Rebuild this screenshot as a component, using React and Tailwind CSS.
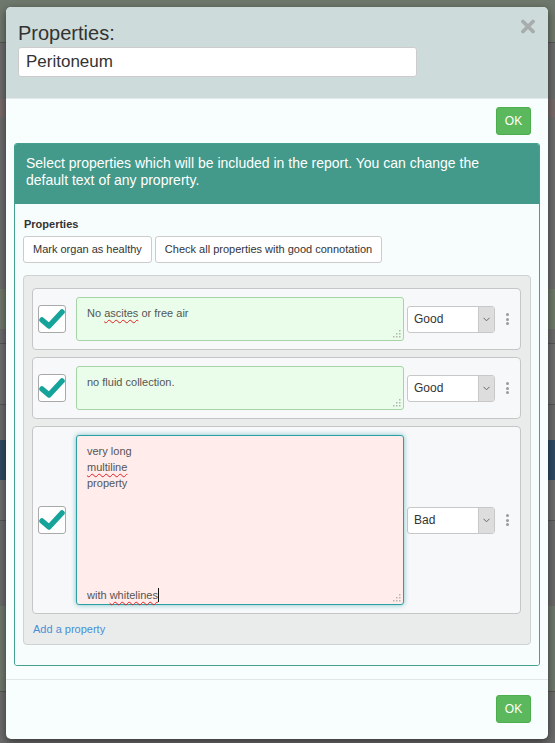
import React from 'react';

const font = { fontFamily: '"Liberation Sans", Arial, sans-serif' };

function Check() {
  return (
    <div className="w-[28px] h-[28px] shrink-0 rounded-[3px] border border-[#a9a9a9] bg-white flex items-center justify-center">
      <svg width="26" height="22" viewBox="0 0 26 22">
        <path d="M3 12 L10 18 L23 4" fill="none" stroke="#16a39a" strokeWidth="5.5" strokeLinecap="round" strokeLinejoin="round" />
      </svg>
    </div>
  );
}

function Grip() {
  return (
    <svg className="absolute right-[2px] bottom-[2px]" width="8" height="8" viewBox="0 0 8 8">
      <rect x="6" y="0" width="1.5" height="1.5" fill="#b5b5b5" />
      <rect x="3" y="3" width="1.5" height="1.5" fill="#b5b5b5" />
      <rect x="6" y="3" width="1.5" height="1.5" fill="#b5b5b5" />
      <rect x="0" y="6" width="1.5" height="1.5" fill="#b5b5b5" />
      <rect x="3" y="6" width="1.5" height="1.5" fill="#b5b5b5" />
      <rect x="6" y="6" width="1.5" height="1.5" fill="#b5b5b5" />
    </svg>
  );
}

function Select({ value }) {
  return (
    <div className="w-[88px] h-[27px] shrink-0 flex rounded-[3px] border border-[#c8c8c8] bg-white overflow-hidden">
      <div className="flex-1 flex items-center pl-[6px] text-[12px] text-[#333]">{value}</div>
      <div className="w-[16px] bg-[#dddddd] border-l border-[#c8c8c8] flex items-center justify-center">
        <svg width="7" height="5" viewBox="0 0 7 5">
          <path d="M0.5 0.8 L3.5 3.8 L6.5 0.8" fill="none" stroke="#666" strokeWidth="1" />
        </svg>
      </div>
    </div>
  );
}

function Dots() {
  return (
    <div className="w-[24px] flex flex-col items-center gap-[1.5px] shrink-0">
      <span className="w-[3px] h-[3px] rounded-full bg-[#9a9a9a]" />
      <span className="w-[3px] h-[3px] rounded-full bg-[#9a9a9a]" />
      <span className="w-[3px] h-[3px] rounded-full bg-[#9a9a9a]" />
    </div>
  );
}

const wavy = 'underline decoration-wavy decoration-[#e02020] decoration-1 underline-offset-[2px]';

function Row({ children, tall, bad, value }) {
  return (
    <div className="flex items-center rounded-[4px] border border-[#c6c6c6] bg-[#f7f8fa] pl-[5px] pt-[8px] pb-[8px]">
      <Check />
      <div
        className={`relative ml-[10px] w-[328px] shrink-0 rounded-[3px] border px-[10px] py-[7px] text-[11px] leading-[16px] text-[#555] ${
          tall ? 'h-[170px]' : 'h-[44px]'
        } ${bad ? 'bg-[#ffeceb] border-[#2ba0a4] shadow-[0_0_5px_rgba(40,160,165,0.6)]' : 'bg-[#eafdea] border-[#a6d4a6]'}`}
      >
        {children}
        <Grip />
      </div>
      <div className="ml-[3px]">
        <Select value={value} />
      </div>
      <Dots />
    </div>
  );
}

function Backdrop() {
  const bands = [
    ['h-[42px]', 'bg-[#6f786c]'],
    ['h-[1px]', 'bg-[#555]'],
    ['h-[56px]', 'bg-[#6b6b6b]'],
    ['h-[18px]', 'bg-[#776a6a]'],
    ['h-[172px]', 'bg-[#6c6c6c]'],
    ['h-[40px]', 'bg-[#6f796a]'],
    ['h-[14px]', 'bg-[#6b6b6b]'],
    ['h-[1px]', 'bg-[#555]'],
    ['h-[60px]', 'bg-[#6e6e6e]'],
    ['h-[1px]', 'bg-[#555]'],
    ['h-[35px]', 'bg-[#6a6a6a]'],
    ['h-[40px]', 'bg-[#2f4a63]'],
    ['h-[40px]', 'bg-[#6d6d6d]'],
    ['h-[1px]', 'bg-[#555]'],
    ['h-[85px]', 'bg-[#6a6a6a]'],
    ['h-[85px]', 'bg-[#6f786c]'],
    ['h-[1px]', 'bg-[#555]'],
    ['h-[51px]', 'bg-[#6b6b6b]'],
  ];
  return (
    <div className="absolute inset-0 flex flex-col">
      {bands.map(([h, bg], i) => (
        <div key={i} className={`${h} ${bg} shrink-0`} />
      ))}
    </div>
  );
}

export default function App() {
  return (
    <div className="relative w-[555px] h-[743px] overflow-hidden bg-[#6b6b6b]" style={font}>
      <Backdrop />

      <div className="absolute left-[6px] top-[7px] w-[542px] rounded-[5px] overflow-hidden bg-[#f8fdfd] shadow-[0_3px_9px_rgba(0,0,0,0.5)]">
        {/* header */}
        <div className="relative h-[92px] bg-[#cddbda] border-b border-[#e3e8e8] px-[12px] pt-[14px]">
          <div className="text-[20px] leading-[24px] text-[#333]">Properties:</div>
          <div className="mt-[2px] w-[399px] h-[30px] rounded-[3px] border border-[#cccccc] bg-white flex items-center px-[7px] text-[17px] text-[#333]">
            Peritoneum
          </div>
          <svg className="absolute left-[514px] top-[12px]" width="16" height="15" viewBox="0 0 16 15">
            <path d="M3 2.5 L13 12.5 M13 2.5 L3 12.5" stroke="#a8acac" strokeWidth="3.8" strokeLinecap="round" />
          </svg>
        </div>

        {/* body */}
        <div className="pt-[8px]">
          <div className="flex justify-end pr-[17px]">
            <button className="w-[35px] h-[28px] rounded-[3px] bg-[#5cb85c] border border-[#4cae4c] text-white text-[12px]">OK</button>
          </div>

          <div className="mt-[8px] mx-[8px] rounded-[3px] border border-[#44a08f] overflow-hidden">
            <div className="bg-[#43998a] pl-[11px] pr-[40px] pt-[11px] pb-[15px] text-[14px] leading-[17px] text-white">
              Select properties which will be included in the report. You can change the default text of any proprerty.
            </div>
            <div className="bg-[#f7fcfc] px-[8px] pt-[14px] pb-[20px]">
              <div className="pl-[1px] text-[11px] leading-[13px] font-bold text-[#333]">Properties</div>
              <div className="mt-[5px] flex gap-[3px]">
                <button className="h-[27px] px-[9px] rounded-[3px] border border-[#cccccc] bg-white text-[11px] text-[#333]">Mark organ as healthy</button>
                <button className="h-[27px] px-[9px] rounded-[3px] border border-[#cccccc] bg-white text-[11px] text-[#333]">Check all properties with good connotation</button>
              </div>

              <div className="mt-[12px] rounded-[4px] border border-[#cfd2d1] bg-[#e9eceb] pl-[8px] pr-[9px] pt-[12px] pb-[8px]">
                <div className="flex flex-col gap-[7px]">
                  <Row value="Good">
                    No <span className={wavy}>ascites</span> or free air
                  </Row>
                  <Row value="Good">no fluid collection.</Row>
                  <Row value="Bad" tall bad>
                    <div>very long</div>
                    <div><span className={wavy}>multiline</span></div>
                    <div>property</div>
                    <div className="h-[96px]" />
                    <div>
                      with <span className={wavy}>whitelines</span>
                      <span className="inline-block w-[1px] h-[14px] bg-[#111] align-[-3px]" />
                    </div>
                  </Row>
                </div>
                <div className="mt-[8px] pl-[1px] text-[11px] leading-[14px] text-[#4a8fd6]">Add a property</div>
              </div>
            </div>
          </div>

          {/* footer */}
          <div className="mt-[13px] border-t border-[#e3e6e6] pt-[15px] pb-[16px] pr-[17px] flex justify-end">
            <button className="w-[35px] h-[28px] rounded-[3px] bg-[#5cb85c] border border-[#4cae4c] text-white text-[12px]">OK</button>
          </div>
        </div>
      </div>
    </div>
  );
}
